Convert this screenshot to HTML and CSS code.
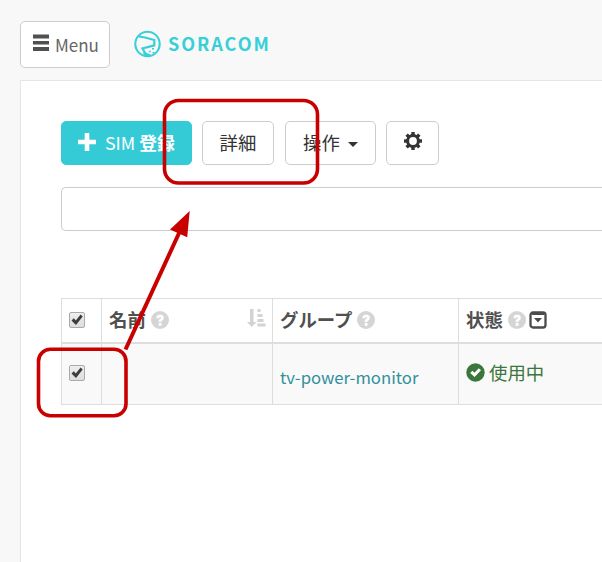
FILE: index.html
```html
<!DOCTYPE html>
<html lang="ja">
<head>
<meta charset="utf-8">
<title>SORACOM</title>
<link rel="stylesheet" href="styles.css">
</head>
<body>
<svg class="defs" aria-hidden="true">
  <symbol id="help" viewBox="0 0 18 18"><circle cx="9" cy="9" r="9" fill="#d5d5d5"/><path d="M5.500 7.200V5.500L7.300 3.700h3.600L12.700 5.500V8L10.500 10.200V11H7.700V9L9.800 7.400V6.200H8.400V7.200Z" fill="#fff"/><path d="M7.700 12h2.800v2.800H7.700z" fill="#fff"/></symbol>
  <symbol id="check" viewBox="0 0 16 16"><path d="M2.500 8.500 4.800 6.200 6.800 8.500 11.600 2.600 13.700 4.500 7 12.900Z" fill="#3c3c3c"/></symbol>
</svg>
<header class="topbar">
  <button class="btn menu"><svg width="16" height="17" viewBox="0 0 16 17"><path d="M0 .5h16v4H0zM0 7h16v3.500H0zM0 13h16v4H0z" fill="#505050"/></svg><span>Menu</span></button>
  <div class="brand">
    <svg width="27" height="28" viewBox="0 0 27 28" fill="none" stroke="#37cfd8"><circle cx="13.500" cy="14" r="12.200" stroke-width="2.100"/><path d="M5 6.500 11 7.500 20.300 10V15.300L8.500 18.500 12.500 25.500" stroke-width="2.200"/><path d="M9.500 23 13 24.500 16.500 26" stroke-width="2.500"/><path d="M18 18.700h2M14.800 21.500h2M18.500 22.700h2" stroke-width="1.500"/></svg>
    <span>SORACOM</span>
  </div>
</header>
<main class="panel">
  <div class="toolbar">
    <button class="btn primary"><svg width="18" height="18" viewBox="0 0 18 18"><path d="M6.700 0h4.600v6.700H18v4.600h-6.700V18H6.700v-6.700H0V6.700h6.700z" fill="#fff"/></svg><span>SIM <b>登録</b></span></button>
    <button class="btn detail"><span>詳細</span></button>
    <button class="btn action"><span>操作</span><i class="caret"></i></button>
    <button class="btn gear"><svg width="18" height="18" viewBox="0 0 18 18"><g fill="#333"><path id="tooth" d="M7.300 0h3.400v4H7.300z"/><use href="#tooth" transform="rotate(45 9 9)"/><use href="#tooth" transform="rotate(90 9 9)"/><use href="#tooth" transform="rotate(135 9 9)"/><use href="#tooth" transform="rotate(180 9 9)"/><use href="#tooth" transform="rotate(225 9 9)"/><use href="#tooth" transform="rotate(270 9 9)"/><use href="#tooth" transform="rotate(315 9 9)"/></g><circle cx="9" cy="9" r="5.400" fill="none" stroke="#333" stroke-width="3"/></svg></button>
  </div>
  <div class="search"></div>
  <div class="table">
    <div class="row head">
      <div class="cell"><span class="box"><svg width="16" height="16"><use href="#check"/></svg></span></div>
      <div class="cell"><span>名前</span><svg class="help"><use href="#help"/></svg><svg class="sort" width="19" height="18" viewBox="0 0 19 18"><path d="M3 0h3.500v13H9.500L4.700 18 0 13H3zM10.500 0h3v3h-3zM10.500 5h5v3h-5zM10.500 10h6v3h-6zM10.500 14.500h8v3h-8z" fill="#d3d3d3"/></svg></div>
      <div class="cell"><span>グループ</span><svg class="help"><use href="#help"/></svg></div>
      <div class="cell"><span>状態</span><svg class="help"><use href="#help"/></svg><svg class="filter" width="18" height="18" viewBox="0 0 18 18"><rect x="1.500" y="1.500" width="15" height="15" rx="2.500" fill="#fff" stroke="#4b4b4b" stroke-width="2.300"/><path d="M3 2h12v2H3z" fill="#4b4b4b"/><path d="M5 7h8L9 11.500z" fill="#4b4b4b"/></svg></div>
    </div>
    <div class="row data">
      <div class="cell"><span class="box"><svg width="16" height="16"><use href="#check"/></svg></span></div>
      <div class="cell"></div>
      <div class="cell"><a class="group">tv-power-monitor</a></div>
      <div class="cell status"><svg width="19" height="19" viewBox="0 0 19 19"><circle cx="9.500" cy="9.500" r="9.200" fill="#3c763d"/><path d="M4.200 10 6.400 7.800 8.500 9.800 12.800 5.200 15 7.300 8.600 14Z" fill="#fff"/></svg><span>使用中</span></div>
    </div>
  </div>
</main>
<svg class="notes" width="602" height="562" viewBox="0 0 602 562" fill="none" stroke="#c90000"><rect x="164.500" y="100.500" width="153" height="82.500" rx="14" stroke-width="3.600"/><rect x="38.500" y="349.300" width="87.500" height="66.400" rx="12" stroke-width="3.600"/><path d="M125.500 349.500 180 231" stroke-width="4"/><path d="M189.700 211 187.200 237.300 170 229.500Z" fill="#c90000" stroke="none"/></svg>
</body>
</html>
```
FILE: styles.css
```css
* { box-sizing: border-box; }
body {
  margin: 0;
  width: 602px;
  height: 562px;
  overflow: hidden;
  position: relative;
  background: #f8f8f8;
  color: #333;
  font: 18.4px/26px "Noto Sans CJK JP", sans-serif;
}
svg { display: block; flex: none; }
.defs { position: absolute; width: 0; height: 0; }
.topbar { height: 80px; padding: 21px 0 0 20px; display: flex; align-items: flex-start; }
.btn {
  display: flex;
  align-items: center;
  height: 44px;
  padding: 0;
  border: 1.5px solid #ccc;
  border-radius: 5px;
  background: #fff;
  color: #333;
  font: inherit;
  white-space: nowrap;
}
.btn span { margin-top: -2px; }
.menu { width: 90px; height: 47px; padding-left: 12px; gap: 6px; color: #666; font-size: 17px; }
.menu svg { margin-top: -4px; }
.menu span { margin-top: 0; }
.brand { display: flex; align-items: center; margin-left: 24px; height: 45px; gap: 7px; color: #37cfd8; }
.brand span { font: bold 18px/26px "Noto Sans CJK JP", sans-serif; letter-spacing: 2px; margin-top: -1px; }
.panel { margin-left: 20px; height: 482px; padding: 40px 0 0 40px; border: solid #e5e5e5; border-width: 1px 0 0 1px; background: #fff; }
.toolbar { display: flex; height: 44px; }
.primary { width: 131px; border-color: #35cbd6; background: #35cbd6; color: #fff; padding-left: 16px; gap: 9px; font-size: 17.8px; }
.primary svg { margin-top: -3px; }
.detail { width: 72px; margin-left: 10px; justify-content: center; }
.action { width: 91px; margin-left: 11px; padding-left: 17px; }
.caret { margin: 3px 0 0 8px; border: solid transparent; border-width: 5px 5px 0; border-top-color: #333; }
.gear { width: 53px; margin-left: 10px; justify-content: center; }
.gear svg { margin-top: -4px; }
.search { height: 44px; margin-top: 22px; border: 1.5px solid #ccc; border-right: 0; border-radius: 5px 0 0 5px; }
.table { margin-top: 67px; border: 1px solid #ddd; border-right: 0; }
.row { display: grid; grid-template-columns: 40px 171px 186px 1fr; }
.head { height: 45px; border-bottom: 2px solid #ddd; font-weight: bold; color: #505050; }
.data { height: 60px; background: #f9f9f9; }
.cell { display: flex; align-items: center; padding-left: 7px; border-right: 1px solid #ddd; white-space: nowrap; }
.cell:last-child { border-right: 0; }
.head .cell { padding-bottom: 2px; }
.head .cell > span:not(.box) { margin-top: -2px; }
.data .cell { padding-bottom: 3px; }
.help { width: 18px; height: 18px; margin-left: 5px; }
.sort { margin: -3px 6px 0 auto; }
.filter { margin-left: 3px; }
.box { width: 16px; height: 16px; border: 1px solid #aaa; border-radius: 2px; background: linear-gradient(#eee, #ddd); }
.box svg { margin: -1px; }
.group { color: #31909b; font-size: 16.7px; padding-top: 9px; }
.status { color: #3c763d; gap: 4px; }
.status span { margin-top: -2px; }
.notes { position: absolute; left: 0; top: 0; pointer-events: none; }
```
